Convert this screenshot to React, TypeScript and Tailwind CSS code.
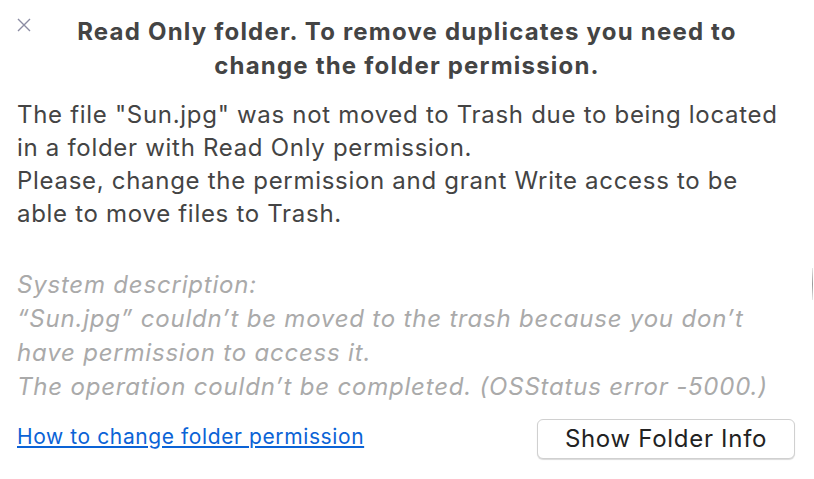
export default function App() {
    return (
        <div className="relative w-[814px] h-[479px] bg-white overflow-hidden" style={{ fontFamily: 'Inter, "Liberation Sans", sans-serif' }}>
            <button className="absolute left-[16px] top-[17px] w-[16px] h-[16px] text-[#8b8ca3]">
                <svg viewBox="0 0 16 16" width="16" height="16" fill="none" stroke="currentColor" strokeWidth="1.4">
                    <path d="M2 2 L14 14 M14 2 L2 14" />
                </svg>
            </button>
            <div className="absolute right-[1px] top-[268px] w-[1px] h-[32px] bg-gradient-to-b from-[#e6e6e6] via-[#9a9a9a] to-[#e6e6e6]" />

            <div className="flex flex-col px-[17px] pt-[15px]">
                <h2 className="text-center text-[24px] leading-[34px] font-bold tracking-[1.2px] text-[#444444]">
                    Read Only folder. To remove duplicates you need to
                    <br />
                    change the folder permission.
                </h2>

                <div className="mt-[15px] text-[24px] leading-[33px] tracking-[0.7px] text-[#444444]">
                    <p>The file "Sun.jpg" was not moved to Trash due to being located<br />in a folder with Read Only permission.</p>
                    <p>Please, change the permission and grant Write access to be<br />able to move files to Trash.</p>
                </div>

                <div className="mt-[38px] text-[24px] leading-[34px] tracking-[0.8px] italic text-[#aaaaaa]">
                    <p>System description:</p>
                    <p>“Sun.jpg” couldn’t be moved to the trash because you don’t<br />have permission to access it.</p>
                    <p>The operation couldn’t be completed. (OSStatus error -5000.)</p>
                </div>

                <div className="mt-[15px] flex items-center justify-between pr-[2px]">
                    <a href="#" className="mb-[4px] text-[21px] tracking-[0.6px] text-[#0b63d6] underline underline-offset-2">
                        How to change folder permission
                    </a>
                    <button className="w-[258px] h-[40px] rounded-[6px] border border-[#d0d0d0] bg-white shadow-[0_1px_1px_rgba(0,0,0,0.15)] text-[24px] tracking-[0.7px] text-[#222222]">
                        Show Folder Info
                    </button>
                </div>
            </div>
        </div>
    );
}
